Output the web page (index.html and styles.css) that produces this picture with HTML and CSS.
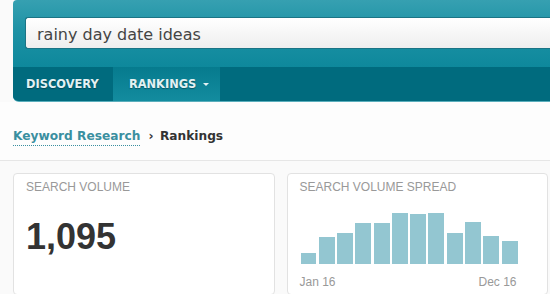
FILE: index.html
```html
<!DOCTYPE html>
<html lang="en">
<head>
    <meta charset="UTF-8">
    <meta name="viewport" content="width=device-width, initial-scale=1.0">
    <title>Keyword Research - Rankings</title>
    <link rel="stylesheet" href="styles.css">
</head>
<body>
    <div class="app-header">
        <div class="search-row">
            <input type="text" class="search-input" value="rainy day date ideas">
        </div>
        <div class="nav-bar">
            <a class="nav-tab">DISCOVERY</a>
            <a class="nav-tab nav-tab-active">RANKINGS <span class="caret"></span></a>
        </div>
    </div>

    <div class="breadcrumb">
        <a class="crumb-link">Keyword Research</a>
        <span class="crumb-sep">›</span>
        <span class="crumb-current">Rankings</span>
    </div>

    <div class="content">
        <div class="stat-card">
            <div class="card-label">SEARCH VOLUME</div>
            <div class="big-number">1,095</div>
        </div>
        <div class="stat-card">
            <div class="card-label">SEARCH VOLUME SPREAD</div>
            <div class="spread-chart" id="spread-chart"></div>
            <div class="chart-axis">
                <span>Jan 16</span>
                <span>Dec 16</span>
            </div>
        </div>
    </div>

    <script>
        // monthly volume, Jan 16 .. Dec 16
        const MONTHS = [11, 27, 31, 41, 41, 51, 50, 51, 31, 42, 28, 23];

        const chart = document.getElementById('spread-chart');
        chart.innerHTML = MONTHS.map(h => `<div class="bar" style="height: ${h}px"></div>`).join('');
    </script>
</body>
</html>
```

FILE: styles.css
```css
body {
    font-family: "DejaVu Sans", Verdana, sans-serif;
    background-color: #fafafa;
    margin: 0;
    padding: 0;
    overflow: hidden;
}

.app-header {
    margin-left: 13px;
    margin-right: -10px;
    background: linear-gradient(180deg, #36a0b1 0%, #1d92a5 30%, #007f93 100%);
    border-radius: 4px 0 0 6px;
    border-bottom: 1px solid #5aaebc;
    overflow: hidden;
}

.search-row {
    padding: 17px 0 18px 12px;
}

.search-input {
    display: block;
    box-sizing: border-box;
    width: 100%;
    height: 32px;
    padding: 3px 11px 0;
    border: 1px solid #1b7485;
    border-right: none;
    border-radius: 3px 0 0 3px;
    background: linear-gradient(180deg, #ffffff 0%, #eeeeee 100%);
    font-family: "DejaVu Sans", Verdana, sans-serif;
    font-size: 16px;
    color: #444;
    outline: none;
}

.nav-bar {
    display: flex;
    height: 34px;
    background: #006b7e;
}

.nav-tab {
    display: flex;
    align-items: center;
    padding: 0 13px;
    font-size: 11.4px;
    font-weight: bold;
    color: #e3f1f3;
    text-shadow: 0 1px 1px rgba(0, 40, 50, 0.5);
    cursor: pointer;
}

.nav-tab:first-child {
    width: 74px;
}

.nav-tab-active {
    width: 78px;
    padding: 0 13px 0 16px;
    background: linear-gradient(180deg, #067b8e 0%, #138c9f 100%);
}

.caret {
    display: inline-block;
    width: 0;
    height: 0;
    margin-left: 7px;
    border-left: 3px solid transparent;
    border-right: 3px solid transparent;
    border-top: 3px solid #e3f1f3;
}

.breadcrumb {
    padding: 27px 13px 0;
    height: 31px;
    background: #fdfdfd;
    border-bottom: 1px solid #e6e6e6;
    font-size: 12.2px;
    font-weight: bold;
    color: #333;
}

.crumb-link {
    color: #3a8fa0;
    text-decoration: none;
    border-bottom: 1px dotted #3a8fa0;
    padding-bottom: 2px;
}

.crumb-sep {
    margin: 0 2px 0 4px;
}

.content {
    display: flex;
    gap: 12px;
    padding: 12px 2px 0 13px;
}

.stat-card {
    flex: 1;
    box-sizing: border-box;
    height: 122px;
    padding: 6px 12px;
    background: #fff;
    border: 1px solid #e2e2e2;
    border-radius: 4px;
    font-family: "Liberation Sans", Arial, sans-serif;
}

.card-label {
    font-size: 12px;
    line-height: 14px;
    color: #999;
}

.big-number {
    margin-top: 23px;
    font-size: 36px;
    line-height: 40px;
    font-weight: bold;
    color: #333;
}

.spread-chart {
    display: flex;
    align-items: flex-end;
    gap: 2.3px;
    height: 60px;
    margin-top: 10px;
    margin-left: 1px;
    width: 217px;
}

.bar {
    width: 16px;
    background: #93c6d1;
}

.chart-axis {
    display: flex;
    justify-content: space-between;
    width: 217px;
    margin-top: 11px;
    font-size: 12px;
    line-height: 14px;
    color: #999;
}
```
